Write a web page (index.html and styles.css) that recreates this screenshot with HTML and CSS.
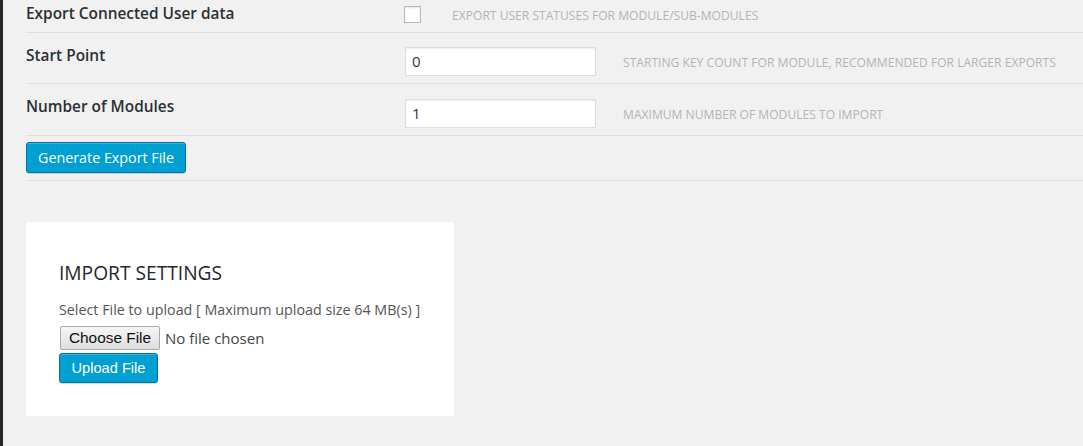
FILE: index.html
```html
<!DOCTYPE html>
<html lang="en">
<head>
<meta charset="utf-8">
<title>Import / Export</title>
<link rel="stylesheet" href="styles.css">
</head>
<body>
<div class="page">
  <aside class="adminmenu"></aside>
  <main class="content">
    <div class="form-table">
      <div class="row row-first">
        <div class="label">Export Connected User data</div>
        <div class="field">
          <span class="checkbox"></span>
          <span class="desc desc-check">Export user statuses for module/sub-modules</span>
        </div>
      </div>
      <div class="row">
        <div class="label">Start Point</div>
        <div class="field">
          <span class="input">0</span>
          <span class="desc">Starting key count for module, recommended for larger exports</span>
        </div>
      </div>
      <div class="row row-third">
        <div class="label">Number of Modules</div>
        <div class="field">
          <span class="input">1</span>
          <span class="desc">Maximum number of modules to import</span>
        </div>
      </div>
      <div class="row row-submit">
        <button class="btn-primary btn-generate">Generate Export File</button>
      </div>
    </div>

    <section class="card">
      <h2 class="card-title">IMPORT SETTINGS</h2>
      <p class="card-help">Select File to upload [ Maximum upload size 64 MB(s) ]</p>
      <div class="file-row">
        <span class="file-btn">Choose File</span>
        <span class="file-name">No file chosen</span>
      </div>
      <button class="btn-primary btn-upload">Upload File</button>
    </section>
  </main>
</div>
</body>
</html>
```

FILE: styles.css
```css
html, body {
  margin: 0;
  padding: 0;
  height: 100%;
}

body {
  background: #f1f1f1;
  font-family: "Open Sans", "Liberation Sans", sans-serif;
  color: #444;
  overflow: hidden;
}

.page {
  display: flex;
  min-height: 446px;
}

.adminmenu {
  width: 3px;
  flex: none;
  background: #23282d;
}

.content {
  flex: 1;
  padding-left: 23px;
}

.row {
  display: flex;
  border-bottom: 1px solid #dedede;
  height: 50px;
  box-sizing: content-box;
}

.row-first {
  height: 32px;
}

.row-third {
  height: 51px;
}

.label {
  width: 378px;
  flex: none;
  font-size: 15.4px;
  font-weight: 600;
  color: #2b3035;
  padding-top: 13px;
  line-height: 20px;
}

.row-first .label {
  padding-top: 4px;
}

.field {
  display: flex;
  align-items: center;
  height: 100%;
  padding-top: 7px;
  box-sizing: border-box;
}

.row-third .field {
  padding-top: 8px;
}

.row-first .field {
  padding-top: 0;
  padding-bottom: 4px;
}

.checkbox {
  width: 15px;
  height: 15px;
  border: 1px solid #b4b9be;
  background: #fff;
  box-shadow: inset 0 1px 2px rgba(0, 0, 0, 0.1);
}

.input {
  width: 183px;
  height: 27px;
  margin-left: 1px;
  border: 1px solid #ddd;
  background: #fff;
  box-shadow: inset 0 1px 2px rgba(0, 0, 0, 0.07);
  font-size: 15px;
  line-height: 27px;
  padding-left: 6px;
  color: #32373c;
}

.desc {
  margin-left: 27px;
  text-transform: uppercase;
  font-size: 12.1px;
  color: #b4b4b4;
  padding-top: 1px;
}

.desc-check {
  margin-left: 31px;
  padding-top: 3px;
}

.row-submit {
  height: 44px;
  align-items: center;
}

.btn-primary {
  background: #00a0d2;
  border: 1px solid #0073aa;
  border-radius: 3px;
  color: #fff;
  box-shadow: inset 0 1px 0 rgba(120, 200, 230, 0.5), 0 1px 0 rgba(0, 0, 0, 0.15);
  cursor: pointer;
}

.btn-generate {
  width: 160px;
  height: 31px;
  font-family: "Open Sans", sans-serif;
  font-size: 14.3px;
  padding: 0;
  margin-top: -1px;
}

.card {
  margin-top: 41px;
  width: 395px;
  height: 194px;
  background: #fff;
  border-radius: 2px;
  padding-left: 33px;
  box-sizing: content-box;
  overflow: hidden;
}

.card-title {
  margin: 38px 0 0;
  font-size: 19.2px;
  font-weight: 400;
  color: #23282d;
  line-height: 26px;
}

.card-help {
  margin: 14px 0 0;
  font-size: 14.3px;
  line-height: 20px;
  color: #555;
}

.file-row {
  display: flex;
  align-items: center;
  margin-top: 6px;
  height: 24px;
}

.file-btn {
  width: 98px;
  height: 22px;
  border: 1px solid #a9a9a9;
  border-radius: 2px;
  background: linear-gradient(#f6f6f6, #dedede);
  font-family: "Liberation Sans", Arial, sans-serif;
  font-size: 15.4px;
  color: #111;
  text-align: center;
  line-height: 22px;
  margin-left: 1px;
}

.file-name {
  margin-left: 5px;
  font-size: 15px;
  color: #444;
}

.btn-upload {
  display: block;
  margin-top: 3px;
  width: 99px;
  height: 30px;
  padding: 0;
  font-family: "Liberation Sans", Arial, sans-serif;
  font-size: 14.6px;
}
```
